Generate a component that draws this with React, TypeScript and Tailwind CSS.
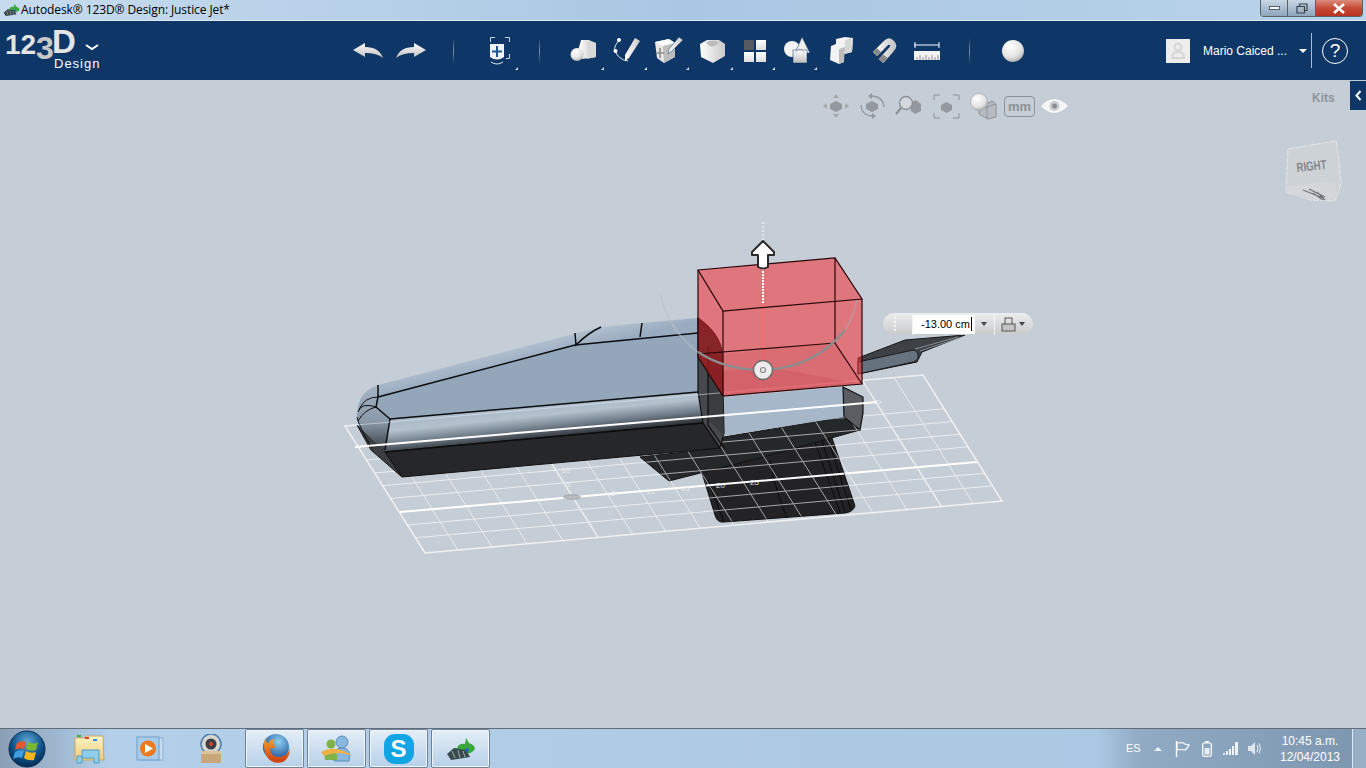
import type { ReactNode } from 'react'

// grid of the work plane, four corners in page coordinates
const A = [345, 426]
const B = [923, 375]
const C = [1002, 501]
const D = [425, 553]
const rows = [0.268, 0.37, 0.47, 0.57, 0.78, 0.88]
const cols = [0.057, 0.116, 0.177, 0.239, 0.36, 0.417, 0.477, 0.536, 0.595, 0.655, 0.714, 0.776, 0.835, 0.95]
const majorCols = [0.3, 0.895]

const mix = (p: number[], q: number[], t: number) => [p[0] + (q[0] - p[0]) * t, p[1] + (q[1] - p[1]) * t]

function GridLines({ opacity = 0.65 }: { opacity?: number }) {
  return (
    <g stroke="#fff" strokeWidth={1} opacity={opacity}>
      {rows.map((t) => {
        const a = mix(A, D, t)
        const b = mix(B, C, t)
        return <line key={'r' + t} x1={a[0]} y1={a[1]} x2={b[0]} y2={b[1]} />
      })}
      {cols.map((t) => {
        const a = mix(A, B, t)
        const b = mix(D, C, t)
        return <line key={'c' + t} x1={a[0]} y1={a[1]} x2={b[0]} y2={b[1]} />
      })}
      {majorCols.map((t) => {
        const a = mix(A, B, t)
        const b = mix(D, C, t)
        return <line key={'m' + t} x1={a[0]} y1={a[1]} x2={b[0]} y2={b[1]} strokeWidth={1.6} />
      })}
    </g>
  )
}

function Scene() {
  return (
    <svg className="absolute inset-0 w-full h-full" viewBox="0 80 1366 648">
      <defs>
        <linearGradient id="fillet" gradientUnits="userSpaceOnUse" x1="540" y1="404" x2="544" y2="442">
          <stop offset="0" stopColor="#a9b9c9" />
          <stop offset="0.3" stopColor="#b4c1cd" />
          <stop offset="0.62" stopColor="#6f7c89" />
          <stop offset="0.95" stopColor="#24272a" />
        </linearGradient>
        <linearGradient id="bevel" gradientUnits="userSpaceOnUse" x1="520" y1="345" x2="524" y2="362">
          <stop offset="0" stopColor="#b3c2d1" />
          <stop offset="1" stopColor="#9aacc0" />
        </linearGradient>
        <linearGradient id="nose" x1="0" y1="0" x2="0" y2="1">
          <stop offset="0" stopColor="#a5b5c6" />
          <stop offset="0.55" stopColor="#8a99a8" />
          <stop offset="1" stopColor="#33373b" />
        </linearGradient>
        <clipPath id="darkParts">
          <polygon points="640,457 720,448 724,437 844,417 860,430 832,438 855,506 847,513 720,522 715,517 702,473 669,481" />
        </clipPath>
      </defs>

      <GridLines />
      <polygon points="345,426 923,375 1002,501 425,553" fill="none" stroke="#fff" strokeWidth="1.6" opacity="0.7" />
      <line x1="400" y1="512" x2="977" y2="462" stroke="#fff" strokeWidth="2" />

      {/* handle */}
      <path d="M702,473 L715,515 Q717,523 724,522 L845,513 Q853,512 855,506 L832,438 L763,457 Z" fill="#232427" stroke="#111" />
      <g stroke="#0b0b0b" fill="none">
        <path d="M770,460 Q775,490 787,518" />
        <path d="M815,443 L840,512" />
        <path d="M822,441 L845,512" />
        <path d="M828,439 L851,510" />
        <path d="M708,480 L724,522" />
      </g>

      {/* rear block */}
      <polygon points="640,457 720,448 724,437 844,417 860,430 763,457 669,481" fill="#26282b" stroke="#151515" />
      <polygon points="724,397 843,387 844,417 724,436" fill="#a6b7c9" />

      {/* nozzle */}
      <polygon points="858,358 905,340 965,335 922,352 917,362 858,374" fill="#3d4146" stroke="#17181a" />
      <g stroke="#9aa3ac" strokeWidth="0.8">
        <line x1="915" y1="349" x2="958" y2="337" />
        <line x1="920" y1="351" x2="962" y2="337" />
      </g>
      <path d="M858,362 L913,350 Q919,351 918,358 Q917,361 913,362 L858,374 Z" fill="#66727e" stroke="#1a1b1d" />

      {/* main body */}
      <polygon points="378,385 573,334 600,327 642,323 698,318 698,333 575,345 378,397" fill="url(#bevel)" />
      <polygon points="378,397 575,345 698,333 698,392 390,419 376,407" fill="#93a6ba" />
      <polygon points="390,419 698,392 703,423 385,452" fill="url(#fillet)" />
      <polygon points="385,452 703,423 720,448 402,477" fill="#25272a" stroke="#111" />
      <polygon points="357,425 371,450 402,477 385,452" fill="#3b3e42" stroke="#111" />
      <path d="M357,417 Q357,392 378,385 L378,397 L376,407 L390,419 L385,452 L360,428 Z" fill="url(#nose)" />
      <g stroke="#0c0d0e" fill="none" strokeWidth="1.5">
        <path d="M378,397 L575,345 L698,333" />
        <path d="M390,419 L698,392" />
        <path d="M385,452 L703,423" />
        <path d="M378,385 L378,397 L376,407 L390,419 L385,450" />
        <path d="M575,333 L576,345 Q588,333 601,327" />
        <path d="M642,323 L640,337" />
      </g>
      <g stroke="#0c0d0e" fill="none" strokeWidth="1">
        <path d="M358,412 Q361,402 376,407" />
        <path d="M358,421 Q364,410 376,407" />
        <path d="M378,397 Q364,397 359,410" />
        <path d="M357,417 Q358,425 372,448" />
      </g>

      {/* rear wall of the body */}
      <path d="M698,318 Q720,334 722,352 L724,433 L720,448 L703,423 L698,392 Z" fill="#45494d" stroke="#0d0d0d" strokeWidth="1.2" />
      <polygon points="708,346 722,360 724,436 708,420" fill="#3a3d40" />
      <path d="M708,346 L708,425 L724,448" fill="none" stroke="#0d0d0d" strokeWidth="1.2" />
      <polygon points="843,387 863,397 863,413 860,430 844,417" fill="#5a5e63" stroke="#101010" strokeWidth="1.2" />

      {/* the plane shows through the dark parts */}
      <g clipPath="url(#darkParts)">
        <GridLines opacity={0.6} />
        <line x1="400" y1="512" x2="977" y2="462" stroke="#fff" strokeWidth="2" />
      </g>
      <line x1="345" y1="426" x2="923" y2="375" stroke="#e8edf1" strokeWidth="1" opacity="0.55" />
      <line x1="355" y1="447" x2="877" y2="402" stroke="#fff" strokeWidth="2" />
      <ellipse cx="877" cy="402" rx="4" ry="1.5" fill="none" stroke="#e8edf1" strokeWidth="0.7" />

      {/* axis marks */}
      <g fill="#eef1f4" fontSize="8" fontFamily="'Liberation Sans', sans-serif" opacity="0.85">
        <text x="561" y="473">10</text>
        <text x="566" y="487">5</text>
        <text x="611" y="496">5</text>
        <text x="646" y="494">10</text>
        <text x="681" y="491">15</text>
        <text x="716" y="488" fill="#fff">20</text>
        <text x="750" y="485" fill="#fff">25</text>
      </g>
      <ellipse cx="572" cy="497" rx="9" ry="3" fill="#9aa1a8" opacity="0.7" />

      {/* extruded box */}
      <line x1="763" y1="302" x2="763" y2="370" stroke="#f2b9bc" strokeWidth="2" opacity="0.9" />
      <polygon points="698,270 835,258 862,299 862,384 723,396 698,357" fill="#f53237" fillOpacity="0.56" />
      <path d="M698,318 Q720,334 722,352 L723,396 L698,357 Z" fill="#6a0d10" fillOpacity="0.5" />
      <polygon points="698,357 835,343 862,384 723,396" fill="#b0151c" fillOpacity="0.1" />
      <polygon points="763,366 862,384 723,396 722,372" fill="#a8252b" fillOpacity="0.12" />
      <g stroke="#2a0608" strokeWidth="1.2" fill="none">
        <polygon points="698,270 835,258 862,299 723,311" />
        <path d="M698,270 L698,357 L723,396 L862,384 L862,299" />
        <path d="M723,311 L723,396" />
        <path d="M835,258 L835,343 L862,384" />
        <path d="M698,354 L835,343" />
      </g>

      {/* move handle */}
      <path d="M660,293 Q668,330 698,352" fill="none" stroke="#b9c0c7" strokeWidth="1.5" opacity="0.6" />
      <path d="M698,352 Q725,370 763,370 Q815,368 845,330" fill="none" stroke="#8d8d8d" strokeWidth="2.5" />
      <path d="M845,330 Q853,318 857,300" fill="none" stroke="#b9a0a2" strokeWidth="1.5" opacity="0.7" />
      <circle cx="763" cy="370" r="9.5" fill="#ececec" stroke="#6d6d6d" strokeWidth="1.5" />
      <circle cx="763" cy="370" r="2.5" fill="none" stroke="#8b8b8b" strokeWidth="1.2" />
      <line x1="763" y1="222" x2="763" y2="240" stroke="#e9edf0" strokeWidth="2" strokeDasharray="2 2" opacity="0.8" />
      <line x1="763" y1="268" x2="763" y2="304" stroke="#fff" strokeWidth="2" strokeDasharray="2 1" />
      <path d="M763,241 L752,252 L752,255 L758,255 L758,267 Q763,270 768,267 L768,255 L774,255 L774,252 Z" fill="#fff" stroke="#2a2a2a" strokeWidth="2" strokeLinejoin="round" />
    </svg>
  )
}

function Corner() {
  return <span className="absolute right-[1px] bottom-[10px] w-0 h-0 border-l-[3px] border-b-[3px] border-l-transparent border-b-[#d5dbe3]" />
}

function Tool({ w, corner, children }: { w: string; corner?: boolean; children: ReactNode }) {
  return (
    <div className={`relative h-full flex items-center justify-center shrink-0 ${w}`}>
      {children}
      {corner && <Corner />}
    </div>
  )
}

function Separator({ ml }: { ml: string }) {
  return <div className={`w-px h-[26px] shrink-0 bg-gradient-to-b from-transparent via-[#7f95b1] to-transparent ${ml}`} />
}

function Defs() {
  return (
    <svg className="absolute w-0 h-0">
      <defs>
        <linearGradient id="wg" x1="0" y1="0" x2="0" y2="1">
          <stop offset="0" stopColor="#fff" />
          <stop offset="1" stopColor="#bdbdbd" />
        </linearGradient>
        <linearGradient id="wd" x1="0" y1="0" x2="1" y2="0">
          <stop offset="0" stopColor="#fff" />
          <stop offset="1" stopColor="#c9c9c9" />
        </linearGradient>
        <radialGradient id="ball" cx="0.4" cy="0.3" r="0.8">
          <stop offset="0" stopColor="#fff" />
          <stop offset="0.6" stopColor="#e3e3e3" />
          <stop offset="1" stopColor="#9d9d9d" />
        </radialGradient>
        <radialGradient id="orb" cx="0.5" cy="0.3" r="0.8">
          <stop offset="0" stopColor="#5fa9d6" />
          <stop offset="0.55" stopColor="#0d4f86" />
          <stop offset="0.85" stopColor="#062f57" />
          <stop offset="1" stopColor="#2ba3c9" />
        </radialGradient>
        <linearGradient id="folder" x1="0" y1="0" x2="0" y2="1">
          <stop offset="0" stopColor="#fff6c9" />
          <stop offset="1" stopColor="#ecc878" />
        </linearGradient>
        <radialGradient id="globe" cx="0.6" cy="0.3" r="0.7">
          <stop offset="0" stopColor="#8fd0f0" />
          <stop offset="1" stopColor="#1c4f95" />
        </radialGradient>
        <linearGradient id="fox" x1="0" y1="0" x2="0" y2="1">
          <stop offset="0" stopColor="#f6a226" />
          <stop offset="1" stopColor="#c93c10" />
        </linearGradient>
      </defs>
    </svg>
  )
}

function UndoIcon({ flip }: { flip?: boolean }) {
  return (
    <svg width="31" height="16" viewBox="0 0 31 16" className={flip ? '-scale-x-100' : ''}>
      <path d="M0,7 L12,0 L12,4 Q26,4 30,15 Q24,10 12,10 L12,14 Z" fill="url(#wg)" />
    </svg>
  )
}

function PrimitivesIcon() {
  return (
    <svg width="27" height="23" viewBox="0 0 27 23">
      <polygon points="11,1 19,1 26,4 26,18 12,20 8,12" fill="url(#wd)" />
      <polygon points="17,2 26,4 26,18 17,20" fill="#d9d9d9" />
      <circle cx="7" cy="15.5" r="6.5" fill="url(#ball)" />
    </svg>
  )
}

function SketchIcon() {
  return (
    <svg width="28" height="27" viewBox="0 0 28 27">
      <path d="M6,3 Q-2,14 4,14 M2,14 Q6,23 15,24" fill="none" stroke="#e8e8e8" strokeWidth="1" />
      <circle cx="6" cy="3" r="2" fill="#fff" />
      <circle cx="2.5" cy="14" r="2" fill="#fff" />
      <polygon points="22,1 27,4 16,21 12,24 12,18" fill="url(#wd)" />
    </svg>
  )
}

function ConstructIcon() {
  return (
    <svg width="28" height="27" viewBox="0 0 28 27">
      <polygon points="0,5 14,2 20,6 20,20 9,26 2,21" fill="#e7e7e7" />
      <polygon points="0,5 14,2 20,6 8,9" fill="#fff" />
      <polygon points="8,9 20,6 20,20 9,26" fill="#bdbdbd" />
      <path d="M5,11 V21 M1.5,16 H9" stroke="#8d8d8d" strokeWidth="1.6" />
      <polygon points="24,0 28,3 17,14 13,17 14,12" fill="url(#wd)" stroke="#0e3666" strokeWidth="0.5" />
    </svg>
  )
}

function ModifyIcon() {
  return (
    <svg width="25" height="24" viewBox="0 0 25 24">
      <path d="M0,5 L7,1 L19,1 L25,5 L25,17 L13,24 L1,18 Z" fill="url(#wd)" />
      <path d="M6,3 Q12,12 19,3 Q12,0 6,3 Z" fill="#bcbcbc" />
    </svg>
  )
}

function PatternIcon() {
  return (
    <div className="grid grid-cols-2 gap-[2px] w-[22px]">
      <div className="h-[10px] bg-[#565b62]" />
      <div className="h-[10px] bg-gradient-to-b from-white to-[#dddddd]" />
      <div className="h-[10px] bg-gradient-to-b from-white to-[#dddddd]" />
      <div className="h-[10px] bg-gradient-to-b from-white to-[#dddddd]" />
    </div>
  )
}

function GroupIcon() {
  return (
    <svg width="27" height="27" viewBox="0 0 27 27">
      <circle cx="8" cy="12" r="8" fill="#f4f4f4" />
      <polygon points="18,0 26,16 11,16" fill="#ededed" stroke="#0e3666" strokeWidth="0.5" />
      <rect x="9" y="13" width="14" height="13" fill="url(#wg)" stroke="#0e3666" strokeWidth="0.5" />
      <path d="M11,16 Q16,8 20,16" fill="none" stroke="#9aa7b8" strokeWidth="0.7" />
    </svg>
  )
}

function CombineIcon() {
  return (
    <svg width="23" height="27" viewBox="0 0 23 27">
      <polygon points="6,2 15,0 23,1 22,15 14,17 14,25 9,27 0,23 1,9 6,7" fill="#f3f3f3" />
      <polygon points="9,12 15,10 14,25 9,27" fill="#bcbcbc" />
      <polygon points="15,3 23,1 22,15 15,17" fill="#d6d6d6" />
    </svg>
  )
}

function SnapIcon() {
  return (
    <svg width="26" height="27" viewBox="0 0 26 27">
      <path d="M4,17 L15,6 Q18,3 21,6 Q24,9 20,13 L10,24" fill="none" stroke="url(#wd)" strokeWidth="6" />
      <path d="M4,17 L8,13 M10,24 L14,19" stroke="#8a8a8a" strokeWidth="6" />
    </svg>
  )
}

function MeasureIcon() {
  return (
    <svg width="26" height="21" viewBox="0 0 26 21">
      <path d="M0,5 H25 M1,2 V8 M25,2 V8" stroke="#fff" strokeWidth="1" fill="none" />
      <rect y="11" width="26" height="9" fill="#f3f3f3" />
      <path d="M3,17 V20 M6,15 V20 M9,17 V20 M12,15 V20 M15,17 V20 M18,15 V20 M21,17 V20 M24,15 V20" stroke="#666" strokeWidth="0.7" />
    </svg>
  )
}

function Toolbar() {
  return (
    <div className="h-[59px] bg-[#0e3666] flex items-center shrink-0 text-white">
      <div className="relative w-[347px] h-full shrink-0">
        <div className="absolute left-[5px] top-[9px] flex items-start font-bold text-[#e4e4e4]">
          <span className="text-[28px] leading-[20px] mt-[5px] w-[31px] whitespace-nowrap">12</span>
          <span className="text-[32px] leading-[23px] mt-[7px] w-[16px] text-[#c8c8c8]">3</span>
          <span className="text-[33px] leading-[24px]">D</span>
        </div>
        <div className="absolute left-[54px] top-[36px] text-[13px] leading-[14px] tracking-[1px]">Design</div>
        <svg className="absolute left-[85px] top-[23px]" width="14" height="8" viewBox="0 0 14 8">
          <path d="M1,1 L7,5 L13,1" fill="none" stroke="#fff" strokeWidth="2" />
        </svg>
      </div>
      <Tool w="w-[42px]"><UndoIcon /></Tool>
      <Tool w="w-[42px]"><UndoIcon flip /></Tool>
      <Separator ml="ml-[22px]" />
      <div className="relative h-full w-[44px] ml-[24px] shrink-0">
        <svg className="absolute left-[12px] top-[16px]" width="20" height="29" viewBox="0 0 20 29">
          <path d="M0.5,5 V0.5 H5 M15,0.5 H19.5 V5 M19.5,17 V21.5 H16" fill="none" stroke="#cdd6e0" strokeWidth="1" />
          <path d="M0,7 H14 V20 Q7,25 0,20 Z" fill="#eef1f5" />
          <path d="M7,9 V20 M2,14.5 H12" stroke="#21558f" strokeWidth="2" />
          <path d="M1,25 Q7,29 13,25" fill="none" stroke="#dfe5ec" strokeWidth="1" />
        </svg>
        <span className="absolute right-[4px] bottom-[10px] w-0 h-0 border-l-[3px] border-b-[3px] border-l-transparent border-b-[#d5dbe3]" />
      </div>
      <Separator ml="ml-[17px]" />
      <Tool w="w-[44px] ml-[21px]" corner><PrimitivesIcon /></Tool>
      <Tool w="w-[43px]" corner><SketchIcon /></Tool>
      <Tool w="w-[42px]" corner><ConstructIcon /></Tool>
      <Tool w="w-[44px]" corner><ModifyIcon /></Tool>
      <Tool w="w-[42px]" corner><PatternIcon /></Tool>
      <Tool w="w-[42px]" corner><GroupIcon /></Tool>
      <Tool w="w-[46px]"><CombineIcon /></Tool>
      <Tool w="w-[40px]"><SnapIcon /></Tool>
      <Tool w="w-[46px]"><MeasureIcon /></Tool>
      <Separator ml="ml-[19px]" />
      <Tool w="w-[44px] ml-[21px]">
        <svg width="22" height="22" viewBox="0 0 22 22"><circle cx="11" cy="11" r="11" fill="url(#ball)" /></svg>
      </Tool>
      <div className="flex-1" />
      <div className="relative w-[24px] h-[24px] bg-[#ededed] flex items-center justify-center shrink-0">
        <svg width="14" height="17" viewBox="0 0 14 17">
          <circle cx="7" cy="5" r="3.5" fill="none" stroke="#d6d6d6" strokeWidth="2" />
          <path d="M1,16 Q1,10 7,10 Q13,10 13,16 Z" fill="none" stroke="#d6d6d6" strokeWidth="2" />
        </svg>
      </div>
      <span className="ml-[13px] w-[84px] text-[12px] whitespace-nowrap shrink-0">Mario Caiced ...</span>
      <span className="ml-[12px] w-0 h-0 border-x-[4px] border-t-[4px] border-x-transparent border-t-white shrink-0" />
      <div className="ml-[4px] w-px h-[35px] bg-[#a9bbd0] shrink-0" />
      <div className="ml-[10px] mr-[18px] w-[26px] h-[26px] rounded-full border border-white flex items-center justify-center text-[19px] leading-none shrink-0">?</div>
    </div>
  )
}

function ViewTools() {
  return (
    <div className="absolute left-[822px] top-[13px] flex items-center h-[26px] gap-[9px]">
      <svg width="28" height="26" viewBox="0 0 28 26">
        <polygon points="14,8 20,11 20,16 14,19 8,16 8,11" fill="#94999f" />
        <path d="M14,1 L11,5 H17 Z M14,25 L11,21 H17 Z M1,13 L5,10 V16 Z M27,13 L23,10 V16 Z" fill="#a3a8ad" />
      </svg>
      <svg width="27" height="26" viewBox="0 0 27 26">
        <polygon points="13,8 19,11 19,16 13,19 7,16 7,11" fill="#94999f" />
        <path d="M12,3 Q24,3 25,14 M14,23 Q3,23 2,12" fill="none" stroke="#94999f" strokeWidth="1.3" />
        <path d="M9,3 L13,0 V6 Z M17,23 L13,20 V26 Z" fill="#94999f" />
      </svg>
      <svg width="26" height="24" viewBox="0 0 26 24">
        <polygon points="15,9 21,6 26,10 26,17 20,20 16,17" fill="#94999f" />
        <circle cx="11" cy="9" r="6.5" fill="#d3d8dd" stroke="#8a9096" strokeWidth="1.4" />
        <path d="M6,14 L1,20" stroke="#8a9096" strokeWidth="2" />
      </svg>
      <svg className="ml-[3px]" width="27" height="25" viewBox="0 0 27 25">
        <path d="M1,6 V1 H7 M20,1 H26 V6 M26,19 V24 H20 M7,24 H1 V19" fill="none" stroke="#8d9298" strokeWidth="1" />
        <polygon points="13.5,8 19,11 19,16 13.5,19 8,16 8,11" fill="#94999f" />
      </svg>
      <svg className="ml-[1px]" width="27" height="27" viewBox="0 0 27 27">
        <polygon points="9,16 22,8 26,11 26,24 18,26 9,21" fill="#b5bbc1" stroke="#8d9298" />
        <path d="M17,14 L26,11 M17,14 V26 M9,16 L17,14" stroke="#8d9298" fill="none" />
        <circle cx="9" cy="9" r="8.5" fill="url(#ball)" stroke="#9ba1a7" strokeWidth="0.6" />
      </svg>
      <div className="w-[31px] h-[21px] rounded-[4px] border-[1.5px] border-[#8d9298] flex items-center justify-center text-[#8d9298] text-[13px] font-bold leading-none -ml-[2px]">mm</div>
      <svg width="27" height="16" viewBox="0 0 27 16" className="-ml-[3px]">
        <path d="M0,8 Q13,-6 27,8 Q13,22 0,8 Z" fill="#f6f6f6" />
        <circle cx="13.5" cy="8" r="5" fill="#c9cccf" />
        <circle cx="13.5" cy="8" r="2.5" fill="#8a8e92" />
      </svg>
    </div>
  )
}

function ViewCube() {
  return (
    <svg className="absolute left-[1285px] top-[60px]" width="60" height="64" viewBox="0 0 60 64">
      <polygon points="3,9 51,1 54,20 56,44 50,61 26,60 1,52" fill="#cdd2d7" stroke="#e4e8eb" strokeWidth="1" strokeDasharray="6 1" />
      <polygon points="1,46 50,41 52,59 26,60 1,52" fill="#d3d7da" />
      <path d="M18,50 L38,58 M24,49 L40,57 M28,53 L38,60 M32,52 L40,60" stroke="#6f757a" strokeWidth="1.3" />
      <text x="12" y="32" fontSize="13" fontWeight="bold" fontFamily="'Liberation Sans', sans-serif" fill="#85898e" textLength="30" lengthAdjust="spacingAndGlyphs" transform="rotate(-6 12 32)">RIGHT</text>
    </svg>
  )
}

function Viewport() {
  return (
    <div className="relative flex-1 bg-[#c5cdd6] overflow-hidden">
      <Scene />
      <ViewTools />
      <ViewCube />
      <span className="absolute left-[1312px] top-[9px] text-[12px] font-bold text-[#8f959b]">Kits</span>
      <div className="absolute right-0 top-[1px] w-[16px] h-[29px] bg-[#0e3666] flex items-center justify-center">
        <svg width="7" height="11" viewBox="0 0 7 11"><path d="M5.5,1 L1.5,5.5 L5.5,10" fill="none" stroke="#fff" strokeWidth="2" /></svg>
      </div>
      {/* value box of the extrude */}
      <div className="absolute left-[883px] top-[233px] w-[150px] h-[22px] rounded-full bg-gradient-to-b from-[#eceded] to-[#c9cacb] flex items-center text-[11px] text-black">
        <div className="w-[30px] h-full border-r border-[#f2f2f2] flex items-center pl-[11px]">
          <span className="h-[14px] border-l-2 border-dotted border-[#f7f7f7]" />
        </div>
        <div className="w-[62px] h-[19px] bg-white flex items-center pl-[8px] whitespace-nowrap">
          -13.00 cm<span className="w-px h-[14px] bg-black ml-[1px]" />
        </div>
        <span className="ml-[6px] w-0 h-0 border-x-[3.5px] border-t-[4px] border-x-transparent border-t-[#444]" />
        <div className="ml-[7px] w-px h-full bg-[#f2f2f2]" />
        <svg className="ml-[6px]" width="15" height="15" viewBox="0 0 15 15">
          <rect x="4" y="1" width="7" height="7" fill="none" stroke="#555" />
          <rect x="1" y="7" width="13" height="7" fill="#c4c4c4" stroke="#555" />
        </svg>
        <span className="ml-[3px] w-0 h-0 border-x-[3.5px] border-t-[4px] border-x-transparent border-t-[#444]" />
      </div>
    </div>
  )
}

function PinnedButton({ children }: { children: ReactNode }) {
  return (
    <div className="w-[59px] h-[39px] rounded-[2px] border border-[#6f8298] bg-gradient-to-b from-[#e4eef8] to-[#b7d0e8] shadow-[inset_0_0_0_1px_#eef5fc] flex items-center justify-center shrink-0">
      {children}
    </div>
  )
}

function AppIcon({ size = 17 }: { size?: number }) {
  return (
    <svg width={size} height={size * 0.8} viewBox="0 0 30 24">
      <path d="M10,14 Q12,5 19,7 L20,1 L23,6 Q29,8 29,12 Q26,17 18,17 Z" fill="#3aa83c" />
      <path d="M1,17 L8,11 L20,13 L24,20 L12,22 L5,23 Z" fill="#3a4a4d" />
      <path d="M6,14 L9,21 M12,13 L14,21 M17,14 L19,20" stroke="#9db0b5" strokeWidth="1" />
      <circle cx="21" cy="13" r="2" fill="#2868b8" />
    </svg>
  )
}

function Taskbar() {
  return (
    <div className="h-[40px] shrink-0 border-t border-[#5f6c7b] bg-gradient-to-r from-[#8a9fb6] via-[#b3cfe9] via-[8%] to-[#a9c6e2] flex items-center relative">
      <div className="w-[54px] flex justify-center shrink-0">
        <svg width="38" height="38" viewBox="0 0 38 38">
          <circle cx="19" cy="19" r="18" fill="url(#orb)" stroke="#0b2f52" />
          <path d="M9,13 Q13,10 18,12 L16,19 Q12,17 7,20 Z" fill="#e8562e" />
          <path d="M20,12 Q25,15 30,12 L28,20 Q23,22 18,19 Z" fill="#7cb82f" />
          <path d="M7,22 Q11,19 16,21 L14,28 Q10,26 5,29 Z" fill="#3d9ee0" />
          <path d="M18,21 Q23,24 28,22 L26,30 Q20,31 16,28 Z" fill="#f4b61c" />
        </svg>
      </div>
      <div className="w-[70px] flex justify-center shrink-0">
        <svg width="32" height="30" viewBox="0 0 32 30">
          <path d="M2,4 H12 L13,2 H30 L31,26 H2 Z" fill="url(#folder)" stroke="#c8a75e" />
          <rect x="4" y="1" width="4" height="2" fill="#3fae3f" />
          <rect x="12" y="3" width="4" height="2" fill="#d6442a" />
          <rect x="20" y="5" width="4" height="2" fill="#2a8fd6" />
          <path d="M4,22 H9 V29 H4 Z M9,16 H26 V29 H21 V24 H9 Z" fill="#8fcdea" stroke="#4e9ec8" />
        </svg>
      </div>
      <div className="w-[52px] flex justify-center shrink-0">
        <svg width="29" height="26" viewBox="0 0 29 26">
          <rect x="7" y="2" width="20" height="22" fill="#c5dcf0" stroke="#8cb2d4" />
          <rect x="1" y="1" width="22" height="23" fill="#a8cbe8" stroke="#6f9fc9" />
          <circle cx="12" cy="12.5" r="8" fill="#ee7a1e" />
          <path d="M9,8 L17,12.5 L9,17 Z" fill="#fff" />
        </svg>
      </div>
      <div className="w-[69px] flex justify-center shrink-0">
        <svg width="26" height="29" viewBox="0 0 26 29">
          <circle cx="13" cy="10" r="10" fill="#d9d5cf" stroke="#4d7eab" strokeWidth="1.5" />
          <circle cx="13" cy="10" r="5.5" fill="#3a3f46" />
          <circle cx="13" cy="10" r="2" fill="#d6442a" />
          <rect x="3" y="17" width="20" height="12" fill="#c9a77a" />
          <rect x="3" y="17" width="20" height="3" fill="#dcc29c" />
        </svg>
      </div>
      <div className="flex gap-[3px]">
        <PinnedButton>
          <svg width="32" height="32" viewBox="0 0 32 32">
            <circle cx="17" cy="14" r="13" fill="url(#globe)" />
            <path d="M6,5 Q3,16 8,24 Q14,32 24,29 Q31,25 31,15 Q29,23 21,24 Q11,24 11,15 Q14,16 17,14 Q12,10 16,6 Q10,7 9,11 Q7,9 6,5 Z" fill="url(#fox)" />
          </svg>
        </PinnedButton>
        <PinnedButton>
          <svg width="32" height="27" viewBox="0 0 32 27">
            <circle cx="21" cy="7" r="6" fill="#8ab7de" stroke="#5a8cb8" />
            <path d="M13,26 Q11,13 21,13 Q31,13 28,26 Z" fill="#8ab7de" stroke="#5a8cb8" />
            <circle cx="10" cy="9" r="4.5" fill="#7fb24a" />
            <path d="M4,25 Q2,15 10,15 Q17,15 16,25 Z" fill="#7fb24a" />
            <path d="M0,17 Q14,9 32,21 Q16,15 3,21 Z" fill="#f1b042" />
          </svg>
        </PinnedButton>
        <PinnedButton>
          <div className="w-[30px] h-[30px] rounded-[11px] bg-[#12a5e6] flex items-center justify-center text-white text-[24px] font-bold leading-none">S</div>
        </PinnedButton>
        <PinnedButton><AppIcon size={30} /></PinnedButton>
      </div>
      <div className="flex-1" />
      <div className="w-[268px] h-full shrink-0 bg-gradient-to-r from-transparent via-[#92abc5] via-[15%] to-[#7d96b0] flex items-center text-white">
        <span className="ml-[28px] w-[15px] text-[11px]">ES</span>
        <span className="ml-[13px] w-0 h-0 border-x-[4px] border-b-[4px] border-x-transparent border-b-[#eef3f7]" />
        <svg className="ml-[13px]" width="15" height="16" viewBox="0 0 15 16">
          <path d="M1.5,0 V16" stroke="#fff" strokeWidth="1.4" />
          <path d="M2,2 Q8,1 10,3 L14,4 Q13,7 10,9 Q6,8 2,9 Z" fill="none" stroke="#fff" strokeWidth="1.2" />
        </svg>
        <svg className="ml-[12px]" width="10" height="16" viewBox="0 0 10 16">
          <rect x="0.7" y="2" width="8.6" height="13.3" rx="1.5" fill="none" stroke="#fff" strokeWidth="1.2" />
          <rect x="3" y="0" width="4" height="2" fill="#fff" />
          <rect x="2.5" y="7" width="5" height="6.5" fill="#e6edf3" />
        </svg>
        <svg className="ml-[11px]" width="16" height="13" viewBox="0 0 16 13">
          <path d="M0,11 H2 V13 H0 Z M3,9 H5 V13 H3 Z M6,7 H8 V13 H6 Z M9,4 H11 V13 H9 Z M12,0 H15 V13 H12 Z" fill="#eef3f7" />
        </svg>
        <svg className="ml-[8px]" width="15" height="15" viewBox="0 0 15 15">
          <path d="M1,5 H4 L8,1 V14 L4,10 H1 Z" fill="#dfe7ee" />
          <path d="M10,4 Q12,7.5 10,11 M12,2.5 Q15,7.5 12,12.5" fill="none" stroke="#eef3f7" />
        </svg>
        <div className="ml-[11px] w-[74px] text-center text-[12px] leading-[16px] whitespace-nowrap">
          <div>10:45 a.m.</div>
          <div>12/04/2013</div>
        </div>
        <div className="ml-auto w-[14px] h-full border-l border-[#e0e8f0] bg-[#a9bfd4]/60" />
      </div>
    </div>
  )
}

export default function App() {
  return (
    <div className="w-[1366px] h-[768px] overflow-hidden flex flex-col font-['Liberation_Sans',sans-serif]">
      <Defs />
      <div className="relative h-[21px] shrink-0 border-b border-[#dfe7ef] bg-gradient-to-r from-[#c6dbee] via-[#a9c7e3] to-[#b9d3ea] flex items-center pl-[3px]">
        <AppIcon />
        <span className="ml-[1px] text-[12px] tracking-[-0.1px] text-black font-['Open_Sans',sans-serif]">Autodesk® 123D® Design: Justice Jet*</span>
        <div className="absolute right-[3px] top-0 h-[17px] flex rounded-b-[4px] border border-t-0 border-[#57606b] overflow-hidden">
          <div className="w-[27px] flex items-center justify-center bg-gradient-to-b from-[#c9d7e4] to-[#8ea5bb] border-r border-[#57606b]">
            <span className="w-[11px] h-[4px] bg-white border border-[#51606e]" />
          </div>
          <div className="w-[28px] flex items-center justify-center bg-gradient-to-b from-[#c9d7e4] to-[#8ea5bb] border-r border-[#57606b]">
            <svg width="12" height="11" viewBox="0 0 12 11"><path d="M3.5,3 V1 H11 V7.5 H8.5 M1,3.5 H8.5 V10 H1 Z" fill="none" stroke="#39434e" strokeWidth="1.2" /></svg>
          </div>
          <div className="w-[46px] flex items-center justify-center bg-gradient-to-b from-[#dc8b7c] via-[#c54a35] to-[#b8321f]">
            <svg width="14" height="11" viewBox="0 0 14 11"><path d="M2,1 L12,10 M12,1 L2,10" stroke="#fff" strokeWidth="2.6" /></svg>
          </div>
        </div>
      </div>
      <Toolbar />
      <Viewport />
      <Taskbar />
    </div>
  )
}
